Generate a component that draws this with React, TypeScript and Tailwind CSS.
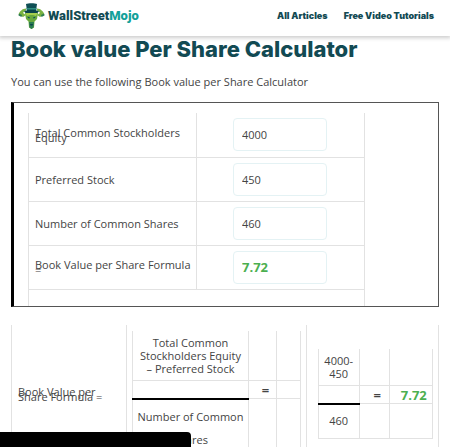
import { useState } from "react";

const Logo = () => (
  <svg viewBox="0 0 54 52" className="h-[26px] w-[27px]" aria-hidden="true">
    <path d="M16 11C9 11 3 17 1 23l9 5 6-4-6-4c2-3 3-4 6-5z" fill="#7ab241" />
    <path d="M38 11c7 0 13 6 15 12l-9 5-6-4 6-4c-2-3-3-4-6-5z" fill="#7ab241" />
    <path d="M2 21l6 3-1 4-6-3zM52 21l-6 3 1 4 6-3z" fill="#2f7d52" />
    <path d="M16 2c4-2 18-2 22 0l-2 14H18z" fill="#0f4f55" />
    <path d="M17 10h20v3H17z" fill="#2f8f80" />
    <path d="M12 16c8-3 22-3 30 0l-3 4H15z" fill="#0b444b" />
    <path d="M14 20h26l-2 12-5 5-1 12-5 3-5-3-1-12-5-5z" fill="#69a93d" />
    <path d="M15 20h24l-3 6-6-2h-6l-6 2z" fill="#a6ce4e" />
    <path d="M19 27l5 2-1 2-3-1zM35 27l-5 2 1 2 3-1z" fill="#0f5257" />
    <path d="M22 38h10l-1 11-4 3-4-3z" fill="#2a7d51" />
    <path d="M24 42h6l-1 3h-4z" fill="#0b444b" />
  </svg>
);

interface FieldRowProps {
  id: string;
  label: string;
  value: string;
  onChange?: (value: string) => void;
  result?: boolean;
}

const FieldRow = ({ id, label, value, onChange, result }: FieldRowProps) => (
  <tr className="h-11">
    <td className="w-1/2 border border-t-0 border-[#e2e2e2] pl-1.5">
      <label htmlFor={id} className="block leading-[5px]">
        {label}
      </label>
    </td>
    <td className="border border-t-0 border-[#e2e2e2] pr-[37px] pl-9">
      <input
        id={id}
        value={value}
        readOnly={!onChange}
        onChange={(e) => onChange?.(e.target.value)}
        className={
          result
            ? "block h-[33px] w-full rounded border border-[#e4f2f4] px-2 text-[13px] font-bold text-[#4caf50]"
            : "block h-[33px] w-full rounded border border-[#e4f2f4] px-2 text-[11px] text-[#444]"
        }
      />
    </td>
  </tr>
);

const App = () => {
  const [equity, setEquity] = useState("4000");
  const [preferred, setPreferred] = useState("450");
  const [shares, setShares] = useState("460");

  const result = ((Number(equity) - Number(preferred)) / Number(shares)).toFixed(2);
  const cell = "border border-t-0 border-[#e2e2e2]";

  return (
    <div className="h-screen overflow-hidden bg-white font-['Open_Sans',sans-serif] text-[11px] text-[#444]">
      <header className="relative flex h-9 items-center justify-between bg-white pr-4 pb-1 pl-[18px] shadow-[0_1px_4px_1px_rgba(0,0,0,0.2)]">
        <a href="#" className="flex items-center gap-[3px]">
          <Logo />
          <span className="font-[Roboto,sans-serif] text-[13px] font-black text-[#124a53]">
            WallStreet<span className="text-[#12a19a]">Mojo</span>
          </span>
        </a>
        <nav className="flex gap-4 font-[Inter,sans-serif] text-[9px] font-black whitespace-nowrap text-[#124a53]">
          <a href="#">All Articles</a>
          <a href="#">Free Video Tutorials</a>
        </nav>
      </header>

      <main className="px-[11px]">
        <h1 className="font-[Inter,sans-serif] text-[22px] leading-[26px] font-extrabold whitespace-nowrap text-[#124a53]">
          Book value Per Share Calculator
        </h1>
        <p className="mt-3 leading-4">
          You can use the following Book value per Share Calculator
        </p>

        <section className="mt-3 border border-l-[3px] border-[#555] border-l-black pt-2.5 pr-[73px] pl-3.5">
          <table className="w-full table-fixed border-collapse">
            <tbody>
              <FieldRow
                id="equity"
                label="Total Common Stockholders Equity"
                value={equity}
                onChange={setEquity}
              />
              <FieldRow
                id="preferred"
                label="Preferred Stock"
                value={preferred}
                onChange={setPreferred}
              />
              <FieldRow
                id="shares"
                label="Number of Common Shares"
                value={shares}
                onChange={setShares}
              />
              <FieldRow
                id="result"
                label="Book Value per Share Formula ="
                value={result}
                result
              />
              <tr className="h-[17px]">
                <td colSpan={2} className="border-x border-[#e2e2e2]" />
              </tr>
            </tbody>
          </table>
        </section>

        <table className="mt-[18px] w-full table-fixed border-collapse">
          <tbody>
            <tr className="h-[138px]">
              <td className={`${cell} w-[27%] pr-4 pl-1.5 leading-[5px]`}>
                Book Value per Share Formula =
              </td>
              <td className={`${cell} w-[42%] px-[5px]`}>
                <table className="w-full table-fixed border-collapse text-center">
                  <tbody>
                    <tr className="h-[50px]">
                      <td className={`${cell} w-[69%] px-1 leading-[13px]`}>
                        Total Common Stockholders Equity – Preferred Stock
                      </td>
                      <td className={`${cell} w-[17%]`} />
                      <td className={cell} />
                    </tr>
                    <tr className="h-[18px]">
                      <td className="border-b-2 border-l border-b-black border-l-[#e2e2e2]" />
                      <td className={`${cell} pl-1.5 text-[13px] leading-4 font-bold`}>=</td>
                      <td className={cell} />
                    </tr>
                    <tr className="h-[58px]">
                      <td className={`${cell} px-1 leading-[23px]`}>
                        Number of Common Shares
                      </td>
                      <td className={cell} />
                      <td className={cell} />
                    </tr>
                  </tbody>
                </table>
              </td>
              <td className={`${cell} pr-[5px] pl-[11px]`}>
                <table className="w-full table-fixed border-collapse text-center">
                  <tbody>
                    <tr className="h-[37px]">
                      <td className={`${cell} w-[36%] leading-[13px]`}>
                        {`${equity}- ${preferred}`}
                      </td>
                      <td className={`${cell} w-[26%]`} />
                      <td className={cell} />
                    </tr>
                    <tr className="h-[18px]">
                      <td className="border-b-2 border-l border-b-black border-l-[#e2e2e2]" />
                      <td className={`${cell} pl-1.5 text-[13px] leading-4 font-bold`}>=</td>
                      <td className={`${cell} pl-1.5 text-[13px] leading-4 font-bold text-[#4caf50]`}>
                        {result}
                      </td>
                    </tr>
                    <tr className="h-[35px]">
                      <td className={cell}>{shares}</td>
                      <td className={cell} />
                      <td className={cell} />
                    </tr>
                  </tbody>
                </table>
              </td>
            </tr>
          </tbody>
        </table>
      </main>

      <div className="fixed bottom-0 left-0 h-[15px] w-[191px] rounded-tr bg-black" />
    </div>
  );
};

export default App;
